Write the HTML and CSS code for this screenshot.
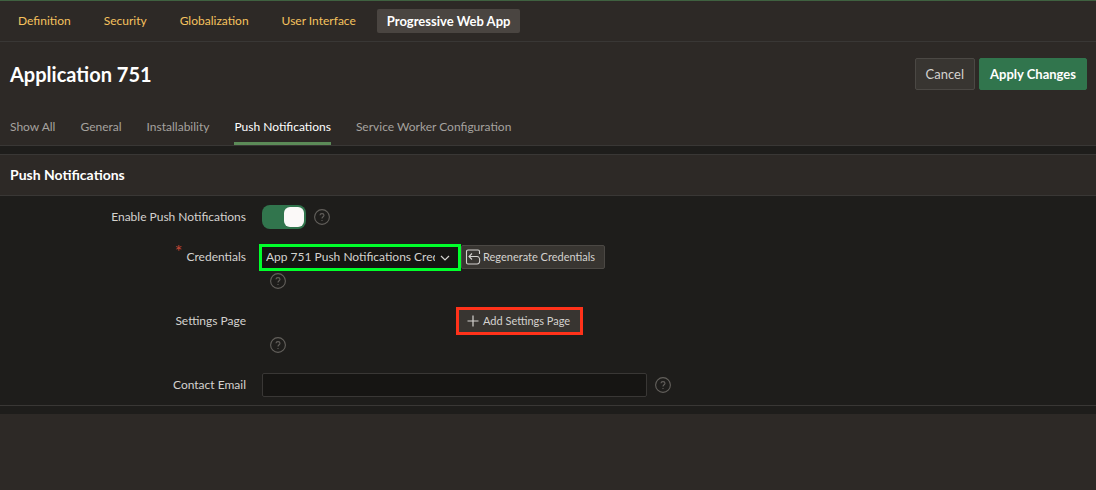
FILE: index.html
```html
<!DOCTYPE html>
<html lang="en">
<head>
<meta charset="utf-8">
<meta name="viewport" content="width=device-width, initial-scale=1">
<title>Application 751</title>
<link rel="stylesheet" href="styles.css">
</head>
<body>
<svg class="sprite" aria-hidden="true">
  <symbol id="help" viewBox="0 0 16 16">
    <circle cx="8" cy="8" r="7.4" fill="none" stroke="currentColor" stroke-width="1.1"/>
    <path d="M6 6.3C6 4 10 4 10 6.3C10 7.9 8 7.7 8 9.6M8 11v1" fill="none" stroke="currentColor" stroke-width="1.1"/>
  </symbol>
</svg>
<nav class="sections" aria-label="Application">
  <a href="#definition">Definition</a>
  <a href="#security">Security</a>
  <a href="#globalization">Globalization</a>
  <a href="#ui">User Interface</a>
  <a class="current" href="#pwa" aria-current="page">Progressive Web App</a>
</nav>
<header class="page-head">
  <div class="title-bar">
    <h1>Application 751</h1>
    <div class="actions">
      <button class="button" type="button">Cancel</button>
      <button class="button primary" type="submit" form="push-form">Apply Changes</button>
    </div>
  </div>
  <nav class="tabs" aria-label="Regions">
    <a href="#all">Show All</a>
    <a href="#general">General</a>
    <a href="#installability">Installability</a>
    <a class="current" href="#push" aria-current="true">Push Notifications</a>
    <a href="#worker">Service Worker Configuration</a>
  </nav>
</header>
<main class="content">
  <section class="region" id="push">
    <h2>Push Notifications</h2>
    <form class="form" id="push-form">
      <div class="row">
        <label for="enable">Enable Push Notifications</label>
        <div class="line">
          <input class="switch" type="checkbox" role="switch" id="enable" checked>
          <button class="help" type="button" aria-label="Help"><svg><use href="#help"/></svg></button>
        </div>
      </div>
      <div class="row">
        <label class="required" for="credentials">Credentials</label>
        <div class="stack">
          <div class="picker">
            <div class="select-wrap">
              <select id="credentials" required><option>App 751 Push Notifications Credentials</option></select>
              <svg class="chevron" viewBox="0 0 10 6" aria-hidden="true"><path d="M1 1l4 4 4-4" fill="none" stroke="currentColor" stroke-width="1.2"/></svg>
            </div>
            <button class="small-button regenerate" type="button"><svg class="icon" viewBox="0 0 16 16" aria-hidden="true"><path d="M14.500 5V2.500a1.500 1.500 0 0 0-1.500-1.500H3a1.500 1.500 0 0 0-1.500 1.500v11A1.500 1.500 0 0 0 3 15h9c3.600 0 3.600-7.500 0-7.500H4M7 4.500L4 7.500l3 3" fill="none" stroke="currentColor" stroke-width="1.1"/></svg>Regenerate Credentials</button>
          </div>
          <button class="help" type="button" aria-label="Help"><svg><use href="#help"/></svg></button>
        </div>
      </div>
      <div class="row">
        <span class="label">Settings Page</span>
        <div class="stack">
          <div class="picker">
            <output class="display" aria-label="Settings Page"></output>
            <button class="small-button add" type="button"><svg class="icon" viewBox="0 0 16 16" aria-hidden="true"><path d="M8 2.500v11M2.500 8h11" fill="none" stroke="currentColor" stroke-width="1.200"/></svg>Add Settings Page</button>
          </div>
          <button class="help" type="button" aria-label="Help"><svg><use href="#help"/></svg></button>
        </div>
      </div>
      <div class="row">
        <label for="email">Contact Email</label>
        <div class="line">
          <input class="text" type="email" id="email">
          <button class="help" type="button" aria-label="Help"><svg><use href="#help"/></svg></button>
        </div>
      </div>
    </form>
  </section>
</main>
</body>
</html>
```
FILE: styles.css
```css
* { box-sizing: border-box; }
body {
  margin: 0;
  background: #2d2926;
  color: #d4d2cf;
  font: 12px/16px Lato, "Open Sans", sans-serif;
}
button, input, select { font: inherit; color: inherit; margin: 0; }
a { text-decoration: none; }
h1, h2 { margin: 0; color: #fff; font-weight: 700; }
.sprite { display: none; }

.sections {
  display: flex;
  gap: 9px;
  padding: 8px 6px;
  border-top: 1px solid #3f6140;
  border-bottom: 1px solid #393735;
}
.sections a {
  padding: 4px 12px;
  border-radius: 2px;
  color: #f5c25e;
}
.sections .current { padding: 4px 10px; background: #4a4541; color: #fff; font-size: 13px; font-weight: 700; }

.page-head { border-bottom: 1px solid #393735; }
.title-bar {
  display: flex;
  align-items: center;
  justify-content: space-between;
  padding: 16px 9px 16px 10px;
}
h1 { font-size: 20px; line-height: 32px; }
.actions { display: flex; gap: 4px; }
.button {
  height: 32px;
  padding: 0 10px;
  border: 1px solid #4b4844;
  border-radius: 2px;
  background: #383531;
  font-size: 13px;
}
.primary { border-color: #31754d; background: #31754d; color: #fff; font-weight: 700; }
.tabs { display: flex; gap: 25px; padding: 0 10px; }
.tabs a { padding: 13px 0 7px; border-bottom: 3px solid transparent; color: #a5a29f; }
.tabs .current { border-color: #5c8b58; color: #fff; }

.content { padding: 8px 0; background: #1e1d1b; }
.region { border: solid #393735; border-width: 1px 0; }
h2 {
  padding: 10px;
  border-bottom: 1px solid #393735;
  background: #2d2926;
  font-size: 14px;
  line-height: 20px;
}
.form { display: flex; flex-direction: column; padding-top: 1px; }
.row {
  display: grid;
  grid-template-columns: 246px minmax(0, 1fr);
  column-gap: 16px;
  padding: 8px 0;
}
.row label, .label { text-align: right; line-height: 24px; }
.required::before { content: "*"; margin-right: 4px; color: #c74634; font-size: 18px; vertical-align: 3px; line-height: 12px; }
.line { display: flex; align-items: center; gap: 8px; }
.stack { padding-bottom: 4px; }
.stack .help { margin: 4px 8px 0; }
.picker { display: flex; align-items: center; height: 24px; }
.help { display: block; width: 16px; height: 16px; padding: 0; border: 0; background: none; color: #63605c; }
.help svg { display: block; width: 16px; height: 16px; }

.switch {
  appearance: none;
  display: flex;
  justify-content: flex-end;
  width: 44px;
  height: 24px;
  padding: 2px;
  border-radius: 8px;
  background: #31754d;
}
.switch::before { content: ""; width: 20px; height: 20px; border-radius: 6px; background: #fbf9f8; }
.switch:not(:checked) { justify-content: flex-start; background: #4b4844; }

.select-wrap { position: relative; margin-left: -3px; z-index: 1; }
.select-wrap select {
  appearance: none;
  display: block;
  width: 202px;
  height: 27px;
  padding: 0 23px 0 4px;
  border: 3px solid #00ff2b;
  background: #161513;
}
.chevron { position: absolute; right: 11px; top: 11px; width: 10px; height: 6px; pointer-events: none; }
.small-button {
  display: flex;
  align-items: center;
  height: 24px;
  border: 1px solid #4b4844;
  border-radius: 2px;
  background: #383531;
  font-size: 11px;
  white-space: nowrap;
}
.icon { width: 16px; height: 16px; margin-right: 2px; }
.regenerate { padding: 0 9px 0 3px; }
.display { width: 194px; }
.add { height: 28px; padding: 0 10px 0 6px; border: 3px solid #ff321a; border-radius: 0; }
.text {
  flex: 0 1 385px;
  min-width: 0;
  height: 24px;
  padding: 0 4px;
  border: 1px solid #393735;
  border-radius: 2px;
  background: #161513;
}
```
